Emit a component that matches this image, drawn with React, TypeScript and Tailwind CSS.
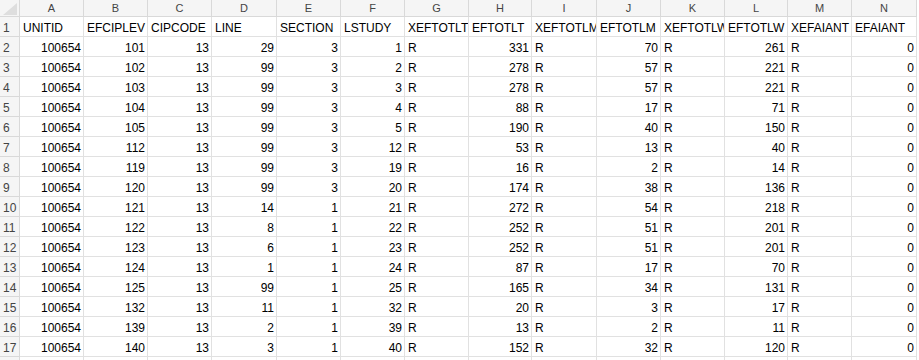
const cols = ["A", "B", "C", "D", "E", "F", "G", "H", "I", "J", "K", "L", "M", "N"];

const headers = [
  "UNITID",
  "EFCIPLEV",
  "CIPCODE",
  "LINE",
  "SECTION",
  "LSTUDY",
  "XEFTOTLT",
  "EFTOTLT",
  "XEFTOTLM",
  "EFTOTLM",
  "XEFTOTLW",
  "EFTOTLW",
  "XEFAIANT",
  "EFAIANT",
];

// [EFCIPLEV, LINE, SECTION, LSTUDY, EFTOTLT, EFTOTLM, EFTOTLW]
const rows: number[][] = [
  [101, 29, 3, 1, 331, 70, 261],
  [102, 99, 3, 2, 278, 57, 221],
  [103, 99, 3, 3, 278, 57, 221],
  [104, 99, 3, 4, 88, 17, 71],
  [105, 99, 3, 5, 190, 40, 150],
  [112, 99, 3, 12, 53, 13, 40],
  [119, 99, 3, 19, 16, 2, 14],
  [120, 99, 3, 20, 174, 38, 136],
  [121, 14, 1, 21, 272, 54, 218],
  [122, 8, 1, 22, 252, 51, 201],
  [123, 6, 1, 23, 252, 51, 201],
  [124, 1, 1, 24, 87, 17, 70],
  [125, 99, 1, 25, 165, 34, 131],
  [132, 11, 1, 32, 20, 3, 17],
  [139, 2, 1, 39, 13, 2, 11],
  [140, 3, 1, 40, 152, 32, 120],
];

const gridCols =
  "grid grid-cols-[20px_64px_64px_64px_65px_64px_64px_64px_63px_65px_64px_64px_63px_64px_65px]";

function Cell({ value, num }: { value?: string | number; num?: boolean }) {
  return (
    <div
      className={`h-[20px] border-r border-b border-[#e1e1e1] flex items-end pb-[1px] overflow-hidden whitespace-nowrap leading-[14px] text-[12px] text-black ${
        num ? "justify-end pr-[2px]" : "pl-[3px]"
      }`}
    >
      {value}
    </div>
  );
}

function RowHead({ n }: { n?: number }) {
  return (
    <div className="h-[20px] border-r border-b border-[#d9d9d9] bg-[#f5f5f5] flex items-end pb-[1px] pl-[3px] leading-[14px] text-[12px] text-[#444]">
      {n}
    </div>
  );
}

export default function App() {
  return (
    <div className="w-[919px] h-[360px] overflow-hidden bg-white font-['Liberation_Sans',Arial,sans-serif]">
      <div className={`${gridCols} w-[917px]`}>
        {/* corner */}
        <div className="h-[17px] border-r border-b border-[#d9d9d9] bg-[#f5f5f5] relative">
          <svg className="absolute left-[3px] top-[3px]" width="14" height="12" viewBox="0 0 14 12">
            <polygon points="14,0 14,12 0,12" fill="#dedede" />
          </svg>
        </div>
        {cols.map((c) => (
          <div
            key={c}
            className="h-[17px] border-r border-b border-[#d9d9d9] bg-[#f5f5f5] flex items-center justify-center leading-[16px] text-[11px] text-[#444]"
          >
            {c}
          </div>
        ))}

        <RowHead n={1} />
        {headers.map((h) => (
          <Cell key={h} value={h} />
        ))}

        {rows.map((r, i) => (
          <div key={i} className="contents">
            <RowHead n={i + 2} />
            <Cell value={100654} num />
            <Cell value={r[0]} num />
            <Cell value={13} num />
            <Cell value={r[1]} num />
            <Cell value={r[2]} num />
            <Cell value={r[3]} num />
            <Cell value="R" />
            <Cell value={r[4]} num />
            <Cell value="R" />
            <Cell value={r[5]} num />
            <Cell value="R" />
            <Cell value={r[6]} num />
            <Cell value="R" />
            <Cell value={0} num />
          </div>
        ))}

        {/* row 18, only its top edge shows */}
        <RowHead />
        {cols.map((c) => (
          <Cell key={c} />
        ))}
      </div>
    </div>
  );
}
